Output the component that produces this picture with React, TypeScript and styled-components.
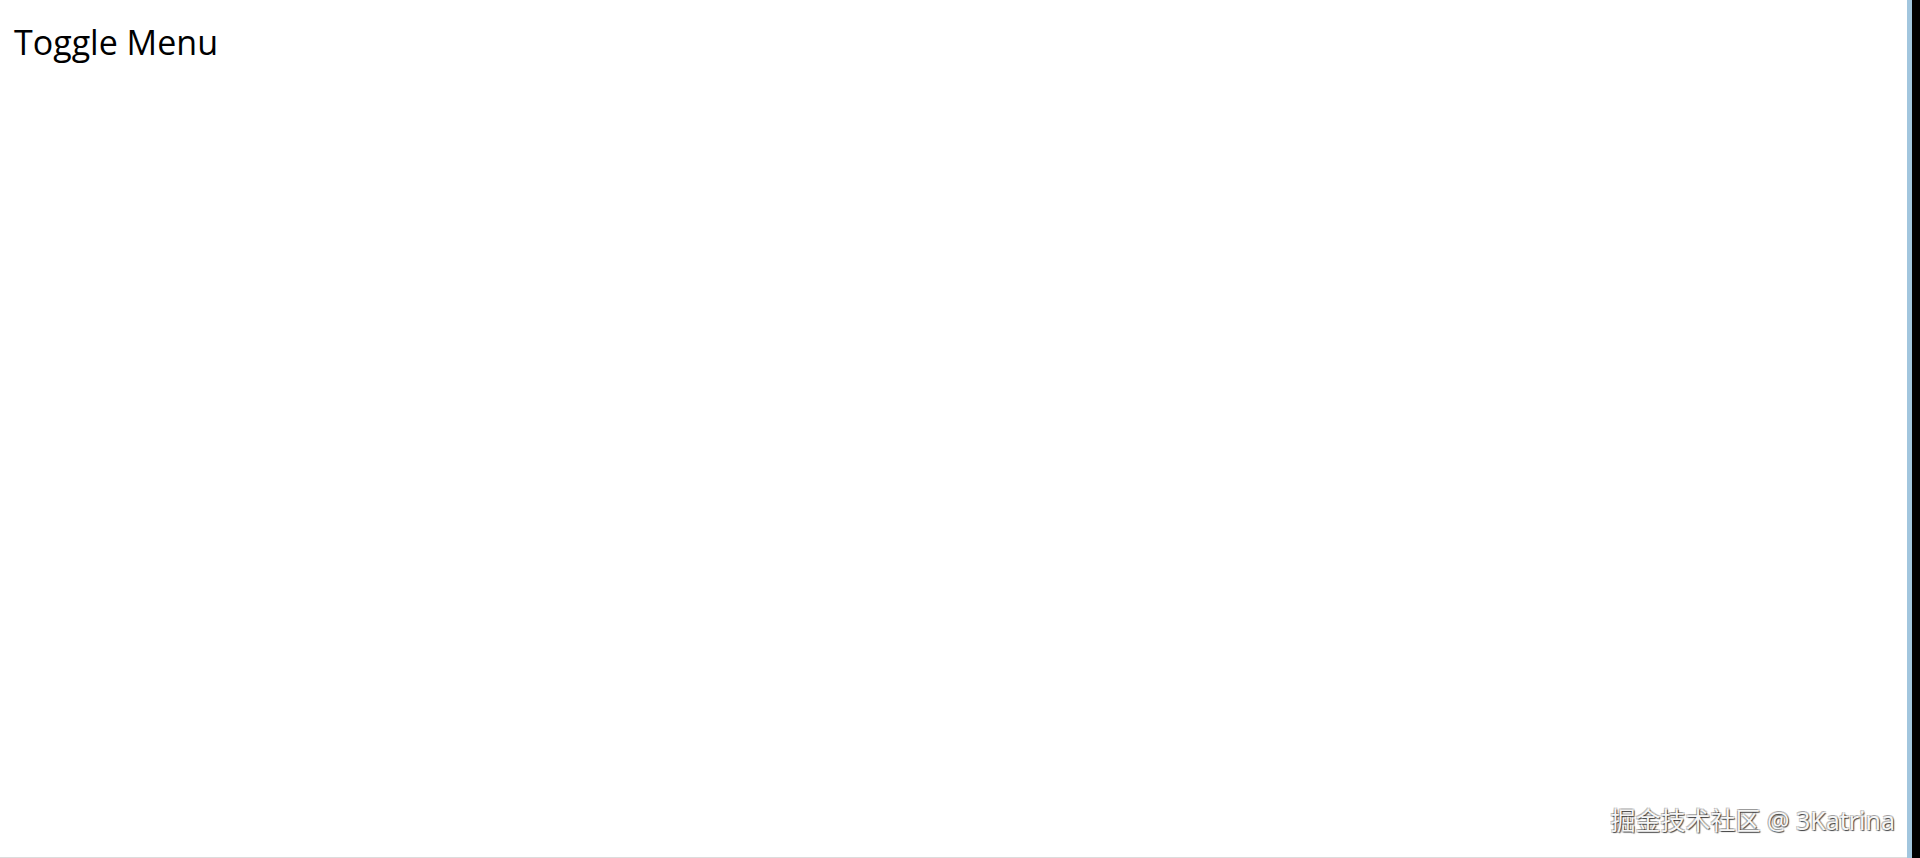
import styled, { createGlobalStyle } from "styled-components";

const GlobalStyle = createGlobalStyle`
  html, body {
    margin: 0;
    padding: 0;
    background: #ffffff;
    overflow: hidden;
  }
`;

const SPage = styled.div`
  display: flex;
  width: 1920px;
  height: 858px;
  font-family: "Open Sans", "Noto Sans", sans-serif;
`;

const SMain = styled.div`
  position: relative;
  flex: 1;
  padding: 19px 14px;
  border-bottom: 1px solid #dcdcdc;
  box-sizing: border-box;
`;

const SToggle = styled.div`
  display: inline-block;
  color: #000;
  font-size: 34px;
  line-height: 46px;
  cursor: pointer;
`;

const SWatermark = styled.span`
  position: absolute;
  right: 12px;
  bottom: 22px;
  font-family: "Noto Sans", "Noto Sans CJK SC", sans-serif;
  font-size: 25px;
  line-height: 30px;
  color: #f6f6f6;
  text-shadow: 1px 1px 1px rgba(0, 0, 0, 0.7), -1px -1px 0 rgba(0, 0, 0, 0.25),
    1px -1px 0 rgba(0, 0, 0, 0.2), -1px 1px 0 rgba(0, 0, 0, 0.2);
  white-space: nowrap;
`;

const SEdge = styled.div<{ $color: string; $width: number }>`
  width: ${(p) => p.$width}px;
  background: ${(p) => p.$color};
`;

export default function App() {
  return (
    <>
      <GlobalStyle />
      <SPage>
        <SMain>
          <SToggle>Toggle Menu</SToggle>
          <SWatermark>掘金技术社区 @ 3Katrina</SWatermark>
        </SMain>
        <SEdge $color="#a2c6de" $width={5} />
        <SEdge $color="#000000" $width={8} />
      </SPage>
    </>
  );
}
